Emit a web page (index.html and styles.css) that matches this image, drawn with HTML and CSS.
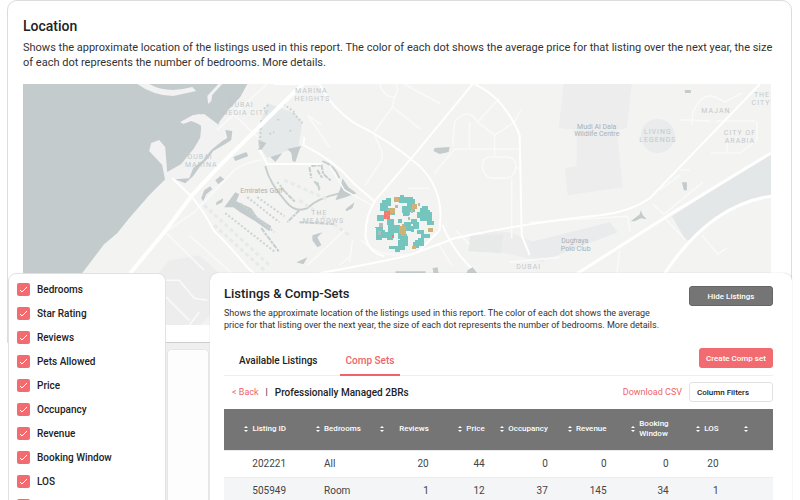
FILE: index.html
```html
<!DOCTYPE html>
<html lang="en">
<head>
    <meta charset="UTF-8">
    <meta name="viewport" content="width=device-width, initial-scale=1.0">
    <title>Listings Report</title>
    <link rel="stylesheet" href="styles.css">
</head>
<body>
    <section class="location">
        <h1>Location</h1>
        <p>Shows the approximate location of the listings used in this report. The color of each dot shows the average price for that listing over the next year, the size of each dot represents the number of bedrooms. More details.</p>

        <svg class="map" viewBox="24 84 747 241" preserveAspectRatio="xMidYMin slice" role="img" aria-label="Map of listings">
            <rect x="24" y="84" width="747" height="241" fill="#f3f3f2"/>

            <!-- districts -->
            <g fill="#ededee">
                <path d="M564 84H632L627 128 617 130 623 187 568 195 565 168 577 166V130L559 128Z"/>
                <path d="M268 103L295 113 303 122 299 147 284 152 268 158 260 146V125Z" fill="#e5e9e9"/>
                <path d="M170 260L200 255 222 275 228 300 200 325H150V285Z"/>
                <path d="M480 230L510 232 540 244 545 262 500 252Z"/>
                <path d="M530 242L610 222 618 232 550 258 530 256Z" fill="#e9ebec"/>
                <path d="M470 235L504 234 501 253 469 251Z" fill="#e8eaea"/>
                <circle cx="658" cy="136" r="17" fill="#e9ebec"/>
            </g>
            <path d="M771 153L672 216 686 240H693Q725 202 771 195Z" fill="#e3e7e7"/>

            <!-- sea -->
            <path d="M24 84H248L241 97 229 110 220 122 218 128 225 134 212 123 200 114 190 117 202 126 201 138 194 151 184 163 172 173 167 178 150 195 130 218 118 233 105 244 83 273 40 325H24Z" fill="#c3cbcc"/>
            <g fill="#f1f2f1">
                <path d="M138 84Q155 96 174 96L197 91 193 87Q168 94 150 84Z"/>
                <path d="M219 84L208 96 209 104 212 101 213 95 223 84Z"/>
                <path d="M181 122L194 115 205 114 221 126 226 138 214 151 202 166 190 178 178 181 166 180 163 165 150 151 152 143 160 140 166 147 168 172 182 164 195 148 202 136 202 125 192 121 184 124Z"/>
            </g>

            <!-- marinas, lakes and golf courses -->
            <g fill="#c3cbcc">
                <path d="M226 130L233 131 232 140 226 144 214 151 209 158 201 166 194 176 186 183 176 179 190 178 194 168 204 160 212 150 223 141 228 138Z"/>
                <path d="M234 157L247 152 249 156 236 161ZM216 180L221 176 225 179 219 184ZM205 190L211 186 213 189 207 194 204 201 202 198ZM217 202L224 198 223 202 217 205Z"/>
                <path d="M225 207L236 192 240 194 237 201 252 208 258 217 272 226 270 231 256 221 241 212 234 207Z"/>
                <path d="M259 140L267 143 262 150 260 149ZM271 157L283 153 276 162ZM288 149L302 146 300 150 296 162 293 161 292 153Z"/>
                <path d="M341 188L343 178 349 187 357 193 346 197 336 200Z"/>
                <path d="M435 148L450 147 449 152 440 154 434 151Z"/>
                <path d="M631 221L640 214 641 210 643 215 647 219 641 218 635 221Z"/>
                <path d="M313 235L323 232 318 237 322 245 318 247 313 240ZM346 209L355 202 353 208 347 211ZM297 262L308 257 304 264Z"/>
            </g>
            <g fill="none" stroke="#c6cecf" stroke-width="2">
                <path d="M323 161Q335 165 340 178M266 166Q270 183 287 202Q296 213 308 208Q318 198 341 193" />
                <path d="M310 167L312 178M312 166L322 165 324 174 332 181M318 170L323 178M315 181L321 189M318 182L320 190M282 188L296 202M300 210L288 222M300 222L336 224M262 228L280 252" stroke-dasharray="5 1 3 1"/>
            </g>
            <g fill="none" stroke="#ccd3d4" stroke-width="2" stroke-dasharray="2 2">
                <path d="M226 213L276 252M241 203L275 232M248 197L280 222M258 197L285 216M262 120L260 150M284 104L295 112M294 113L303 123"/>
                <path d="M269 105L264 109M278 120L281 119M270 134L275 132M290 131L294 130M278 182L288 194"/>
            </g>
            <g fill="none" stroke="#e6eaea" stroke-width="3" stroke-dasharray="4 3">
                <path d="M205 205L270 265M215 225L265 270M300 200L350 235M285 180L330 200"/>
            </g>

            <!-- minor roads -->
            <g fill="none" stroke="#fafafa" stroke-width="1.5">
                <path d="M218 130L250 100 268 84M235 115L258 137M166 232L205 270M190 235L235 275M166 232L195 212 235 170Q245 162 262 160M310 116L322 125M380 84Q385 98 395 97Q400 90 396 84M395 97L393 107 421 129M393 107L374 133 382 150 383 159 365 186M405 84L441 104M453 146L455 122Q468 106 478 122L500 98M470 122V148M478 122L495 135 515 122 521 110M495 135V156"/>
                <path d="M455 149H521M455 149L435 173M408 188H430M483 167Q482 158 490 157H508Q517 158 516 167Q515 178 505 178H492Q484 177 483 167M516 168H522M330 147L308 115M330 165L345 190 372 205M362 240Q380 258 410 254M350 262L353 240M340 265L352 255M308 265L345 230M512 178V238"/>
                <path d="M692 125L693 112Q703 90 717 98L725 102 742 93M680 120H690L710 121M716 121H755M711 153H740L757 140V121M727 153V143M680 170H690M653 204L664 214 703 182M660 190L680 175M666 219L686 240M702 235L718 254 727 248M530 222L628 216 630 232M617 273L620 250"/>
                <path d="M165 295L190 320M165 280H180L195 298 208 300M190 325L200 312M440 245L452 265M456 230L470 244M510 262L560 257"/>
            </g>

            <!-- main roads -->
            <g fill="none" stroke="#fff" stroke-width="2">
                <path d="M131 273L165 232 193 195 220 166 295 92 304 84" stroke-width="4"/>
                <path d="M173 178L193 197Q205 212 215 231Q230 245 248 267L260 278"/>
                <path d="M275 84H320Q332 108 355 123Q390 140 420 166Q440 185 441 214L440 230 420 250"/>
                <path d="M473 84L412 158 376 200Q366 215 366 235Q368 252 385 256"/>
                <path d="M475 84Q505 98 520 135L522 235 530 255"/>
                <path d="M305 137L304 145Q335 160 355 184L376 202"/>
                <path d="M260 150L268 164H322"/>
                <path d="M320 273Q380 262 410 255L455 238Q530 222 600 215Q630 212 650 198L760 84"/>
                <path d="M578 273L672 213 771 153M665 273Q710 205 771 196" stroke-width="3"/>
                <path d="M443 225Q455 255 480 275"/>
            </g>

            <!-- place names -->
            <g class="places">
                <text x="312" y="93">MARINA</text>
                <text x="313" y="101">HEIGHTS</text>
                <text x="242" y="107">DUBAI</text>
                <text x="246" y="115">MEDIA CITY</text>
                <text x="201" y="159">DUBAI</text>
                <text x="202" y="167">MARINA</text>
                <text x="320" y="215">THE</text>
                <text x="324" y="223">MEADOWS</text>
                <text x="658" y="134">LIVING</text>
                <text x="658" y="142">LEGENDS</text>
                <text x="716" y="113">MAJAN</text>
                <text x="740" y="135">CITY OF</text>
                <text x="740" y="143">ARABIA</text>
                <text x="762" y="97">THE</text>
                <text x="761" y="105">CITY</text>
                <text x="529" y="269">DUBAI</text>
            </g>
            <g class="places places-minor">
                <text x="597" y="129">Mudi Al Dala</text>
                <text x="597" y="136">Wildlife Centre</text>
                <text x="262" y="193">Emirates Golf</text>
                <text x="575" y="243">Dughaya</text>
                <text x="576" y="251">Polo Club</text>
            </g>
            <path d="M685 90H691V93H685ZM433 268L438 267 439 273H434ZM468 270L473 267 478 273H467ZM682 182H687V190H684ZM396 271H426V273H396Z" fill="#c3cbcc"/>

            <!-- listing dots -->
            <g shape-rendering="crispEdges">
                <path d="M398 197H400V195H404V197H413V199H415V212H410V215H404V212H402V206H407V203H399V200H398ZM383 203V200H387V198H392V206H389V211H381V203ZM378 215H385V221H378ZM388 219H395V225H400V230H395V235H389V225H388ZM376 227H380V225H384V230H386V238H383V240H377ZM386 232H394V240H388V238H386ZM392 227H402V234H407V239H398V233H392ZM404 222H411V231H406V227H404ZM411 219H417V224H411ZM420 208H422V206H428V210H430V212H432V221H434V225H428V221H420V218H417V212H420ZM413 222H419V229H414V232H411V226H413ZM417 230H424V234H417ZM421 234H430V238H421ZM413 242H415V240H418V238H424V246H419V248H413ZM398 240H400V236H408V246H405V250H400V252H396V249H390V246H398ZM388 208H396V215H390ZM402 210H409V216H404ZM398 219H402V223H398ZM427 221H433V225H427Z" fill="#73c5be"/>
                <path d="M395 197H399V202H395ZM390 208H396V213H392V215H388V209H390ZM399 226H402V224H404V226H406V236H401V234H399ZM412 204H417V209H412ZM428 228H433V232H428ZM412 246H416V249H412Z" fill="#d0b277"/>
                <path d="M385 211H391V219H385ZM393 235H395V238H393Z" fill="#ef7a6d"/>
                <path d="M387 213H388V214H387ZM389 215H390V216H389ZM387 217H388V218H387Z" fill="#d0b277"/>
                <path d="M380 223H384V227H380ZM411 209H413V213H411ZM379 231H382V235H379ZM418 203H420V206H418ZM396 205H398V208H396ZM408 217H410V220H408Z" fill="#b3bbb8"/>
            </g>
        </svg>
    </section>

    <div class="panels">
        <form class="filters">
            <label><input type="checkbox" checked>Bedrooms</label>
            <label><input type="checkbox" checked>Star Rating</label>
            <label><input type="checkbox" checked>Reviews</label>
            <label><input type="checkbox" checked>Pets Allowed</label>
            <label><input type="checkbox" checked>Price</label>
            <label><input type="checkbox" checked>Occupancy</label>
            <label><input type="checkbox" checked>Revenue</label>
            <label><input type="checkbox" checked>Booking Window</label>
            <label><input type="checkbox" checked>LOS</label>
            <label><input type="checkbox" checked aria-label="Other"></label>
        </form>

        <div class="gutter"><div class="gutter-card"></div></div>

        <section class="listings">
            <header class="listings-head">
                <div>
                    <h2>Listings &amp; Comp-Sets</h2>
                    <p>Shows the approximate location of the listings used in this report. The color of each dot shows the average price for that listing over the next year, the size of each dot represents the number of bedrooms. More details.</p>
                </div>
                <button type="button" class="btn btn-dark">Hide Listings</button>
            </header>

            <div class="tab-bar">
                <nav class="tabs">
                    <a href="#available">Available Listings</a>
                    <a href="#comp-sets" class="active">Comp Sets</a>
                </nav>
                <button type="button" class="btn btn-red">Create Comp set</button>
            </div>

            <div class="toolbar">
                <a href="#back">&lt; Back</a>
                <span class="divider">|</span>
                <h3>Professionally Managed 2BRs</h3>
                <a href="#csv" class="download">Download CSV</a>
                <button type="button" class="btn btn-light">Column Filters</button>
            </div>

            <table>
                <thead>
                    <tr>
                        <th class="col-id"><div><svg class="sort" viewBox="0 0 4 6"><path d="M0 2L2 0 4 2ZM0 4L2 6 4 4Z"/></svg>Listing ID</div></th>
                        <th class="col-bedrooms"><div><svg class="sort" viewBox="0 0 4 6"><path d="M0 2L2 0 4 2ZM0 4L2 6 4 4Z"/></svg>Bedrooms</div></th>
                        <th class="col-reviews"><div><svg class="sort" viewBox="0 0 4 6"><path d="M0 2L2 0 4 2ZM0 4L2 6 4 4Z"/></svg>Reviews</div></th>
                        <th class="col-price"><div><svg class="sort" viewBox="0 0 4 6"><path d="M0 2L2 0 4 2ZM0 4L2 6 4 4Z"/></svg>Price</div></th>
                        <th class="col-occupancy"><div><svg class="sort" viewBox="0 0 4 6"><path d="M0 2L2 0 4 2ZM0 4L2 6 4 4Z"/></svg>Occupancy</div></th>
                        <th class="col-revenue"><div><svg class="sort" viewBox="0 0 4 6"><path d="M0 2L2 0 4 2ZM0 4L2 6 4 4Z"/></svg>Revenue</div></th>
                        <th class="col-window"><div><svg class="sort" viewBox="0 0 4 6"><path d="M0 2L2 0 4 2ZM0 4L2 6 4 4Z"/></svg><span>Booking<br>Window</span></div></th>
                        <th class="col-los"><div><svg class="sort" viewBox="0 0 4 6"><path d="M0 2L2 0 4 2ZM0 4L2 6 4 4Z"/></svg>LOS</div></th>
                        <th class="col-more"><div><svg class="sort" viewBox="0 0 4 6"><path d="M0 2L2 0 4 2ZM0 4L2 6 4 4Z"/></svg></div></th>
                    </tr>
                </thead>
                <tbody>
                    <tr>
                        <td>202221</td>
                        <td>All</td>
                        <td>20</td>
                        <td>44</td>
                        <td>0</td>
                        <td>0</td>
                        <td>0</td>
                        <td>20</td>
                        <td></td>
                    </tr>
                    <tr>
                        <td>505949</td>
                        <td>Room</td>
                        <td>1</td>
                        <td>12</td>
                        <td>37</td>
                        <td>145</td>
                        <td>34</td>
                        <td>1</td>
                        <td></td>
                    </tr>
                </tbody>
            </table>
        </section>
    </div>
</body>
</html>
```
FILE: styles.css
```css
* {
    box-sizing: border-box;
}

body {
    font-family: Roboto, "Liberation Sans", sans-serif;
    margin: 0;
    padding: 0 8px 0 7px;
    height: 100vh;
    overflow: hidden;
    background-color: #fff;
    color: #222;
}

h1, h2, h3, p {
    margin: 0;
    font-weight: 500;
}

a {
    color: #ef6469;
    text-decoration: none;
}

.location {
    padding: 16px 15px 17px;
    border: 1px solid #dcdcdc;
    border-radius: 10px 10px 0 0;
}

h1 {
    font-size: 14px;
    line-height: 18px;
}

.location p {
    margin: 5px 0 14px;
    font-size: 11px;
    font-weight: 400;
    line-height: 15px;
    color: #333;
}

.map {
    display: block;
    width: calc(100% - 5px);
    height: 241px;
}

.places {
    font-size: 7px;
    letter-spacing: 1px;
    text-anchor: middle;
    fill: #c3c9cb;
}

.places-minor {
    letter-spacing: 0;
    fill: #a9b1b4;
}

/* panels slide up over the map */
.panels {
    position: relative;
    display: flex;
    margin-top: -70px;
}

.filters {
    flex: 0 0 158px;
    margin-left: 1px;
    padding: 3px 8px;
    background-color: #fff;
    border: 1px solid #dfe2e2;
    border-radius: 8px 8px 0 0;
}

.filters label {
    display: flex;
    align-items: center;
    gap: 7px;
    height: 24px;
    font-size: 10px;
    font-weight: 500;
}

.filters input {
    appearance: none;
    width: 13px;
    height: 13px;
    margin: 0;
    border-radius: 2px;
    background: #f26b70 url("data:image/svg+xml,%3Csvg xmlns='http://www.w3.org/2000/svg' viewBox='0 0 13 13'%3E%3Cpath d='M3 7l2 2 5-5' fill='none' stroke='%23fff'/%3E%3C/svg%3E");
}

.gutter {
    flex: 0 0 44px;
    margin-top: 69px;
    padding: 6px 1px 0;
    background-color: #efefef;
    border-top: 1px solid #ccd0d0;
}

.gutter-card {
    height: 100%;
    background-color: #fdfdfd;
    border: 1px solid #e6e6e6;
    border-radius: 4px 4px 0 0;
}

.listings {
    flex: 1;
    padding: 13px 19px 0 14px;
    background-color: #fff;
    border-radius: 8px 8px 0 0;
    box-shadow: 0 0 1px #aaa;
}

.listings-head {
    display: flex;
    justify-content: space-between;
    align-items: flex-start;
}

.listings-head p {
    max-width: 444px;
    margin-top: 5px;
    font-size: 9px;
    font-weight: 400;
    line-height: 12px;
    color: #333;
}

h2 {
    font-size: 13px;
    line-height: 16px;
}

.btn {
    height: 20px;
    padding: 0;
    font-family: inherit;
    font-size: 8px;
    font-weight: 500;
    border: 1px solid transparent;
    border-radius: 3px;
}

.btn-dark {
    flex: none;
    width: 84px;
    color: #fff;
    background-color: #757575;
    border-color: #666;
}

.btn-red {
    width: 74px;
    color: #fff;
    background-color: #f26b70;
}

.btn-light {
    width: 84px;
    padding-left: 7px;
    text-align: left;
    color: #222;
    background-color: #fff;
    border-color: #e2e2e2;
}

.tab-bar {
    display: flex;
    justify-content: space-between;
    margin-top: 17px;
    border-bottom: 1px solid #eee;
}

.tabs {
    display: flex;
    gap: 16px;
    padding-left: 9px;
}

.tabs a {
    padding: 0 6px;
    font-size: 10px;
    font-weight: 500;
    line-height: 26px;
    color: #222;
}

.tabs .active {
    color: #ef6469;
    border-bottom: 2px solid #ef6469;
    margin-bottom: -1px;
}

.toolbar {
    display: flex;
    align-items: center;
    gap: 7px;
    margin: 6px 0 7px;
    padding-left: 8px;
    font-size: 9px;
}

h3 {
    font-size: 10px;
}

.download {
    margin-left: auto;
}

table {
    width: 100%;
    table-layout: fixed;
    border-collapse: collapse;
}

th {
    height: 41px;
    padding: 0;
    font-size: 8px;
    font-weight: 500;
    line-height: 10px;
    text-align: left;
    color: #fff;
    background-color: #757575;
}

th div {
    display: flex;
    justify-content: flex-end;
    align-items: center;
    gap: 4px;
}

.sort {
    width: 4px;
    height: 6px;
    fill: #fff;
}

td {
    height: 27px;
    padding: 0;
    font-size: 10px;
    text-align: right;
    color: #444;
    border-top: 1px solid #ececee;
}

td:nth-child(2) {
    padding-left: 38px;
    text-align: left;
}

tbody tr:nth-child(even) {
    background-color: #f4f5f7;
}

.col-id { width: 11.3%; }
.col-bedrooms { width: 16%; }
.col-reviews { width: 10%; }
.col-price { width: 10.2%; }
.col-occupancy { width: 11.5%; }
.col-revenue { width: 10.7%; }
.col-window { width: 11.3%; }
.col-los { width: 9.1%; }

.col-bedrooms div {
    justify-content: flex-start;
    padding-left: 30px;
}

.col-reviews div {
    justify-content: space-between;
    padding-left: 6px;
}

.col-more div {
    justify-content: center;
}
```
